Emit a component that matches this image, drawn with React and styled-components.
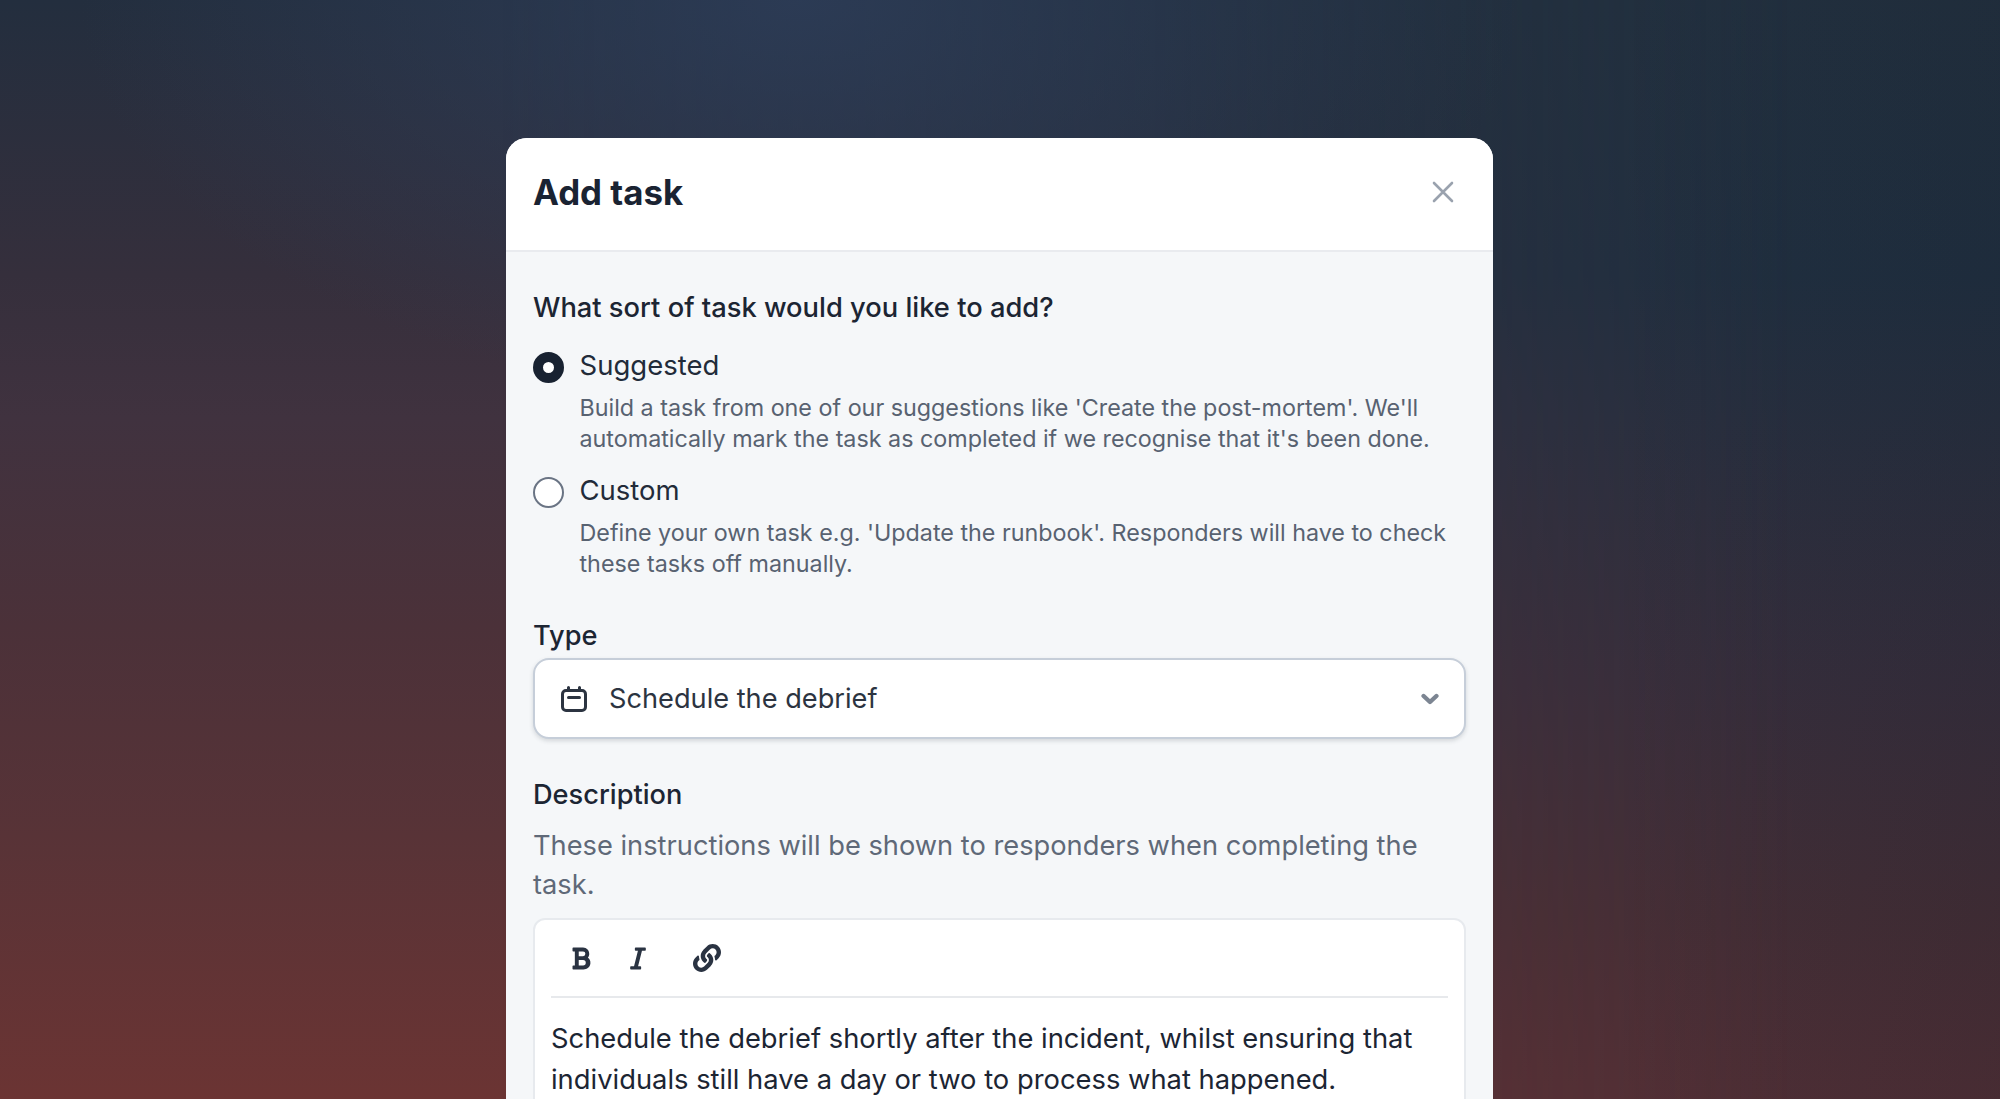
import React from "react";
import styled, { createGlobalStyle } from "styled-components";
import { FaBold, FaItalic, FaLink } from "react-icons/fa";

const Global = createGlobalStyle`
  html, body { margin: 0; height: 100%; }
  body { font-family: Inter, "Noto Sans", sans-serif; overflow: hidden; background: #27303f; }
`;

const Page = styled.div`
  position: relative;
  height: 1099px;
  overflow: hidden;
  box-sizing: border-box;
  padding: 138px 0 0 506px;
  background: linear-gradient(180deg, #232e3e 0%, #352f3c 25%, #40323f 38%, #4b3139 57%, #583337 76%, #6b3433 100%);

  &::before {
    content: "";
    position: absolute;
    inset: 0;
    background: linear-gradient(180deg, #22303f 0%, #202f40 25%, #272f3f 38%, #362e3c 62%, #432e36 83%, #4f2f36 100%);
    -webkit-mask-image: linear-gradient(90deg, transparent 25%, #000 90%);
    mask-image: linear-gradient(90deg, transparent 25%, #000 90%);
  }

  &::after {
    content: "";
    position: absolute;
    inset: 0;
    background:
      radial-gradient(720px 400px at 40% 0%, rgba(46, 62, 90, 0.8), rgba(46, 62, 90, 0) 100%),
      linear-gradient(90deg, rgba(15, 20, 30, 0) 80%, rgba(15, 20, 30, 0.12) 100%);
  }
`;

const Modal = styled.div`
  position: relative;
  z-index: 1;
  width: 987px;
  background: #f5f7f9;
  border-radius: 21px 21px 0 0;
  overflow: hidden;
`;

const Header = styled.header`
  height: 114px;
  box-sizing: border-box;
  padding: 0 36px 5px 27px;
  display: flex;
  align-items: center;
  justify-content: space-between;
  background: #fff;
  border-bottom: 2px solid #e9ebef;
`;

const Title = styled.h1`
  margin: 0;
  font-size: 34.8px;
  line-height: 40px;
  font-weight: 700;
  color: #1a2332;
`;

const CloseButton = styled.span`
  display: flex;
  width: 28px;
  height: 28px;
  color: #9aa2ae;
`;

const Body = styled.div`
  padding: 38px 27px 0;
  display: flex;
  flex-direction: column;
`;

const Question = styled.div`
  font-size: 27.3px;
  line-height: 36px;
  font-weight: 500;
  color: #1c2533;
`;

const Options = styled.div`
  margin-top: 23px;
  display: flex;
  flex-direction: column;
  gap: 19.5px;
`;

const Option = styled.div`
  display: flex;
  gap: 15.5px;
`;

const Radio = styled.span`
  flex: none;
  width: 31px;
  height: 31px;
  margin-top: 3px;
  box-sizing: border-box;
  border-radius: 50%;
  background: #fff;
  border: ${(p) => (p.$checked ? "10px solid #182231" : "2px solid #6a7484")};
`;

const OptionText = styled.div`
  display: flex;
  flex-direction: column;
`;

const OptionLabel = styled.div`
  font-size: 27.5px;
  line-height: 32px;
  color: #222b39;
`;

const OptionHint = styled.div`
  margin-top: 11px;
  font-size: 23.3px;
  line-height: 31px;
  color: #586271;
`;

const FieldLabel = styled.div`
  margin-top: ${(p) => p.$top}px;
  font-size: 27.2px;
  line-height: 36px;
  font-weight: 500;
  color: #1c2533;
`;

const Select = styled.div`
  margin-top: 4px;
  height: 81px;
  box-sizing: border-box;
  padding: 0 25px 0 26px;
  display: flex;
  align-items: center;
  background: #fff;
  border: 2px solid #c6ced9;
  border-radius: 16px;
  box-shadow: 0 2px 4px rgba(60, 70, 85, 0.18);
`;

const SelectValue = styled.span`
  flex: 1;
  margin-left: 22px;
  font-size: 27.2px;
  line-height: 36px;
  color: #2c3441;
`;

const Help = styled.div`
  margin-top: 13px;
  font-size: 27.25px;
  line-height: 39px;
  color: #5f6978;
`;

const Editor = styled.div`
  margin-top: 14px;
  padding: 0 16px;
  height: 300px;
  background: #fff;
  border: 2px solid #e7eaee;
  border-radius: 12px;
`;

const Toolbar = styled.div`
  height: 76px;
  padding-left: 20px;
  display: flex;
  align-items: center;
  color: #2a3342;
  border-bottom: 2px solid #e7e9ec;
`;

const BoldIcon = styled(FaBold)`
  width: 20px;
  height: 25px;
`;

const ItalicIcon = styled(FaItalic)`
  width: 18px;
  height: 25px;
  margin-left: 38px;
`;

const LinkIcon = styled(FaLink)`
  width: 28px;
  height: 28px;
  margin-left: 46px;
`;

const EditorText = styled.div`
  margin-top: 20px;
  font-size: 27.35px;
  line-height: 41px;
  color: #1c2533;
`;

const CalendarIcon = () => (
  <svg width="26" height="26" viewBox="0 0 26 26" fill="none" stroke="#2c3441" strokeWidth="3" strokeLinecap="round" strokeLinejoin="round">
    <rect x="1.5" y="4.5" width="23" height="20" rx="3.5" />
    <path d="M7.5 1.5v3M18.5 1.5v3M7.5 11.5h11" />
  </svg>
);

const CloseIcon = () => (
  <svg width="28" height="28" viewBox="0 0 28 28" fill="none" stroke="currentColor" strokeWidth="2.6" strokeLinecap="round">
    <path d="M5 5l18 18M23 5L5 23" />
  </svg>
);

const ChevronIcon = () => (
  <svg width="18" height="12" viewBox="0 0 18 12" fill="none" stroke="#7c8592" strokeWidth="4.4" strokeLinecap="round" strokeLinejoin="round">
    <path d="M2.6 3L9 9L15.4 3" />
  </svg>
);

export default function App() {
  return (
    <Page>
      <Global />
      <Modal>
        <Header>
          <Title>Add task</Title>
          <CloseButton><CloseIcon /></CloseButton>
        </Header>
        <Body>
          <Question>What sort of task would you like to add?</Question>
          <Options>
            <Option>
              <Radio $checked />
              <OptionText>
                <OptionLabel>Suggested</OptionLabel>
                <OptionHint>
                  Build a task from one of our suggestions like 'Create the post-mortem'. We'll
                  <br />
                  automatically mark the task as completed if we recognise that it's been done.
                </OptionHint>
              </OptionText>
            </Option>
            <Option>
              <Radio />
              <OptionText>
                <OptionLabel>Custom</OptionLabel>
                <OptionHint>
                  Define your own task e.g. 'Update the runbook'. Responders will have to check
                  <br />
                  these tasks off manually.
                </OptionHint>
              </OptionText>
            </Option>
          </Options>
          <FieldLabel $top={39.5}>Type</FieldLabel>
          <Select>
            <CalendarIcon />
            <SelectValue>Schedule the debrief</SelectValue>
            <ChevronIcon />
          </Select>
          <FieldLabel $top={38}>Description</FieldLabel>
          <Help>
            These instructions will be shown to responders when completing the
            <br />
            task.
          </Help>
          <Editor>
            <Toolbar>
              <BoldIcon />
              <ItalicIcon />
              <LinkIcon />
            </Toolbar>
            <EditorText>
              Schedule the debrief shortly after the incident, whilst ensuring that
              <br />
              individuals still have a day or two to process what happened.
            </EditorText>
          </Editor>
        </Body>
      </Modal>
    </Page>
  );
}
